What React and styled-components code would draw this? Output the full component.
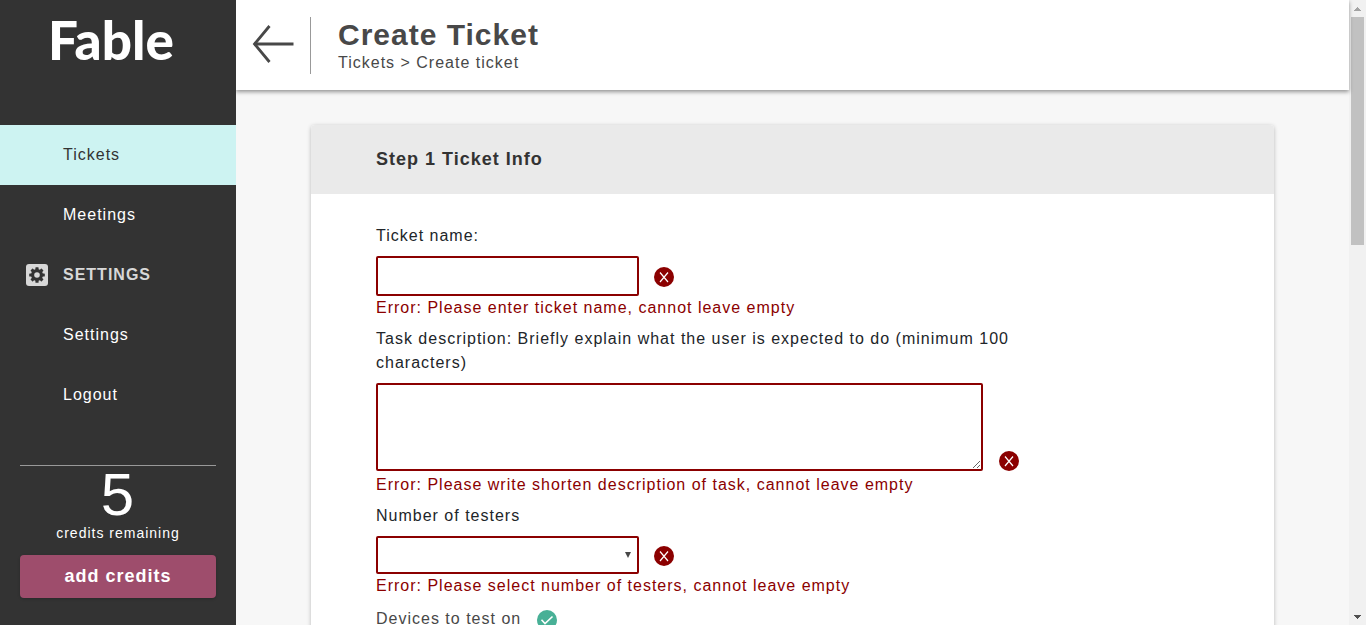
import React from "react";
import styled, { createGlobalStyle } from "styled-components";

const GlobalStyle = createGlobalStyle`
  *, *::before, *::after { box-sizing: border-box; }
  body {
    margin: 0;
    font-family: "Liberation Sans", Arial, sans-serif;
    font-size: 16px;
    line-height: 24px;
    letter-spacing: 1px;
    color: #212529;
    background: #f7f7f7;
  }
  button, input, select, textarea { font: inherit; letter-spacing: inherit; color: inherit; }
`;

const Shell = styled.div`
  display: grid;
  grid-template-columns: 236px minmax(0, 1fr) 17px;
  height: 100vh;
  overflow: hidden;
`;

/* Sidebar */

const Sidebar = styled.aside`
  position: relative;
  z-index: 2;
  display: flex;
  flex-direction: column;
  background: #333;
  color: #fff;
  overflow: hidden;
`;

const Logo = styled.a`
  flex: none;
  height: 125px;
  padding: 10px 14px 0 0;
  font-family: Lato, "Liberation Sans", sans-serif;
  font-size: 53px;
  font-weight: 900;
  line-height: 60px;
  letter-spacing: 0;
  text-align: center;
  color: #fff;
  text-decoration: none;
`;

const NavList = styled.ul`
  margin: 0;
  padding: 0;
  list-style: none;
`;

const NavLink = styled.a`
  display: flex;
  align-items: center;
  height: 60px;
  padding-left: 63px;
  text-decoration: none;
  color: ${(p) => (p.$active ? "#333" : "#fff")};
  background: ${(p) => (p.$active ? "#cdf3f2" : "transparent")};
`;

const NavHeading = styled.h2`
  display: flex;
  align-items: center;
  gap: 15px;
  height: 60px;
  margin: 0;
  padding-left: 26px;
  font-size: 16px;
  font-weight: 700;
  color: #d8d8d8;
`;

const Credits = styled.section`
  display: flex;
  flex-direction: column;
  margin: 40px 20px 0;
  border-top: 1px solid #999;
  text-align: center;
`;

const CreditCount = styled.strong`
  font-size: 60px;
  font-weight: 400;
  line-height: 58px;
`;

const CreditLabel = styled.span`
  font-size: 14px;
  line-height: 18px;
`;

const AddCredits = styled.button`
  height: 43px;
  margin-top: 13px;
  padding: 0 0 2px;
  border: 0;
  border-radius: 4px;
  background: #9e4d6c;
  color: #fff;
  font-size: 18px;
  font-weight: 700;
  box-shadow: 0 1px 3px rgba(0, 0, 0, 0.2);
  cursor: pointer;
`;

/* Main column */

const Main = styled.main`
  display: flex;
  flex-direction: column;
  min-height: 0;
`;

const Header = styled.header`
  position: relative;
  z-index: 1;
  flex: none;
  display: flex;
  align-items: center;
  height: 90px;
  padding-left: 16px;
  background: #fff;
  color: #484848;
  box-shadow: 0 2px 4px rgba(0, 0, 0, 0.4);
`;

const BackButton = styled.button`
  display: flex;
  padding: 0 0 2px;
  border: 0;
  background: none;
  cursor: pointer;
`;

const HeaderText = styled.div`
  margin-left: 16px;
  padding: 1px 0 0 27px;
  border-left: 1px solid #999;
`;

const Title = styled.h1`
  margin: 0;
  font-size: 30px;
  line-height: 34px;
`;

const Breadcrumb = styled.nav`
  line-height: 22px;
  a { color: inherit; text-decoration: none; }
`;

const Scroller = styled.div`
  flex: 1;
  min-height: 0;
  overflow-y: auto;
  scrollbar-width: none;
  padding: 35px 75px;
`;

const Card = styled.form`
  background: #fff;
  border-radius: 4px 4px 0 0;
  box-shadow: 0 1px 4px rgba(0, 0, 0, 0.25);
`;

const CardTitle = styled.h2`
  display: flex;
  align-items: center;
  height: 69px;
  margin: 0;
  padding: 0 65px 2px;
  border-radius: 4px 4px 0 0;
  background: #eaeaea;
  color: #333;
  font-size: 18px;
`;

const CardBody = styled.div`
  display: flex;
  flex-direction: column;
  gap: 7px;
  padding: 30px 65px;
`;

const Field = styled.div`
  width: 100%;
  max-width: 643px;
`;

const Label = styled.label`
  display: block;
  margin-bottom: 8px;
`;

const ControlRow = styled.div`
  display: flex;
  align-items: ${(p) => (p.$tall ? "flex-end" : "center")};
  gap: ${(p) => (p.$tall ? 16 : 15)}px;
  margin-bottom: ${(p) => (p.$tall ? 2 : 0)}px;
`;

const StatusIcon = styled.svg`
  flex: none;
  width: 20px;
  height: 20px;
  margin-top: 2px;
`;

const TextInput = styled.input`
  width: 263px;
  height: 40px;
  padding: 0 10px;
  border: 2px solid #8b0000;
  border-radius: 2px;
  background: #fff;
`;

const TextArea = styled.textarea`
  flex: 1;
  min-width: 0;
  height: 88px;
  padding: 6px 10px;
  border: 2px solid #8b0000;
  border-radius: 2px;
  background: #fff;
`;

const SelectWrap = styled.div`
  position: relative;
  display: flex;
  svg {
    position: absolute;
    top: 16px;
    right: 7px;
    pointer-events: none;
  }
`;

const Select = styled.select`
  appearance: none;
  width: 263px;
  height: 38px;
  padding: 0 24px 0 10px;
  border: 2px solid #8b0000;
  border-radius: 2px;
  background: #fff;
`;

const ErrorText = styled.p`
  margin: 0;
  color: #8b0000;
`;

const DeviceGroup = styled.fieldset`
  margin: 0;
  padding: 0;
  border: 0;
  color: #484848;
`;

const DeviceLegend = styled.legend`
  display: flex;
  align-items: center;
  gap: 16px;
  padding: 2px 0 8px;
`;

const DeviceOption = styled.label`
  display: flex;
  align-items: center;
  gap: 8px;
`;

/* Scrollbar */

const ScrollTrack = styled.div`
  display: flex;
  flex-direction: column;
  align-items: center;
  background: #f1f1f1;
`;

const ScrollThumb = styled.div`
  width: 13px;
  flex: 0 0 228px;
  margin-bottom: auto;
  background: #c1c1c1;
`;

function GearIcon() {
  const teeth = [0, 45, 90, 135, 180, 225, 270, 315];
  return (
    <svg width="22" height="22" viewBox="0 0 22 22" aria-hidden="true">
      <rect width="22" height="22" rx="3" fill="#d8d8d8" />
      <g fill="#333">
        <circle cx="11" cy="11" r="6" />
        {teeth.map((a) => (
          <rect key={a} x="9.4" y="3.2" width="3.2" height="4" rx="0.6" transform={`rotate(${a} 11 11)`} />
        ))}
      </g>
      <circle cx="11" cy="11" r="2.8" fill="#d8d8d8" />
    </svg>
  );
}

function ArrowLeft() {
  return (
    <svg width="42" height="40" viewBox="0 0 42 40" fill="none" stroke="#484848" aria-hidden="true">
      <path d="M41.5 20H2" strokeWidth="2.8" />
      <path d="M17.5 2L2.5 20L17.5 38" strokeWidth="2.8" />
    </svg>
  );
}

function ErrorIcon() {
  return (
    <StatusIcon viewBox="0 0 20 20" role="img" aria-label="Error">
      <circle cx="10" cy="10" r="10" fill="#8b0000" />
      <path d="M6 5.5L14 15M14 5.5L6 15" stroke="#fff" strokeWidth="1.2" fill="none" />
    </StatusIcon>
  );
}

function CheckIcon() {
  return (
    <StatusIcon viewBox="0 0 20 20" role="img" aria-label="Valid">
      <circle cx="10" cy="10" r="10" fill="#48b096" />
      <path d="M4.5 9.8L8 13.5L15.5 6.5" stroke="#fff" strokeWidth="1.6" fill="none" />
    </StatusIcon>
  );
}

function ScrollArrow({ down }) {
  return (
    <svg width="17" height="17" viewBox="0 0 17 17" shapeRendering="crispEdges" aria-hidden="true">
      <path d={down ? "M5 7H12L8.5 11Z" : "M5 11H12L8.5 7Z"} fill={down ? "#505050" : "#a3a3a3"} />
    </svg>
  );
}

export default function App() {
  return (
    <Shell>
      <GlobalStyle />
      <Sidebar>
        <Logo href="#home">Fable</Logo>
        <nav>
          <NavList>
            <li><NavLink href="#tickets" $active>Tickets</NavLink></li>
            <li><NavLink href="#meetings">Meetings</NavLink></li>
          </NavList>
          <NavHeading><GearIcon />SETTINGS</NavHeading>
          <NavList>
            <li><NavLink href="#settings">Settings</NavLink></li>
            <li><NavLink href="#logout">Logout</NavLink></li>
          </NavList>
        </nav>
        <Credits>
          <CreditCount>5</CreditCount>
          <CreditLabel>credits remaining</CreditLabel>
          <AddCredits type="button">add credits</AddCredits>
        </Credits>
      </Sidebar>

      <Main>
        <Header>
          <BackButton type="button" aria-label="Back"><ArrowLeft /></BackButton>
          <HeaderText>
            <Title>Create Ticket</Title>
            <Breadcrumb><a href="#tickets">Tickets</a> &gt; Create ticket</Breadcrumb>
          </HeaderText>
        </Header>
        <Scroller>
          <Card>
            <CardTitle>Step 1 Ticket Info</CardTitle>
            <CardBody>
              <Field>
                <Label htmlFor="ticket-name">Ticket name:</Label>
                <ControlRow>
                  <TextInput id="ticket-name" type="text" aria-describedby="ticket-name-error" />
                  <ErrorIcon />
                </ControlRow>
                <ErrorText id="ticket-name-error">Error: Please enter ticket name, cannot leave empty</ErrorText>
              </Field>
              <Field>
                <Label htmlFor="task">
                  Task description: Briefly explain what the user is expected to do (minimum 100 characters)
                </Label>
                <ControlRow $tall>
                  <TextArea id="task" aria-describedby="task-error" />
                  <ErrorIcon />
                </ControlRow>
                <ErrorText id="task-error">Error: Please write shorten description of task, cannot leave empty</ErrorText>
              </Field>
              <Field>
                <Label htmlFor="testers">Number of testers</Label>
                <ControlRow>
                  <SelectWrap>
                    <Select id="testers" defaultValue="" aria-describedby="testers-error">
                      <option value="" />
                      <option>1</option>
                      <option>2</option>
                      <option>3</option>
                    </Select>
                    <svg width="8" height="6" viewBox="0 0 8 6" aria-hidden="true">
                      <path d="M1 0H7L4 6Z" fill="#484848" />
                    </svg>
                  </SelectWrap>
                  <ErrorIcon />
                </ControlRow>
                <ErrorText id="testers-error">Error: Please select number of testers, cannot leave empty</ErrorText>
              </Field>
              <DeviceGroup>
                <DeviceLegend>Devices to test on <CheckIcon /></DeviceLegend>
                <DeviceOption><input type="checkbox" defaultChecked />Desktop</DeviceOption>
                <DeviceOption><input type="checkbox" />Mobile</DeviceOption>
              </DeviceGroup>
            </CardBody>
          </Card>
        </Scroller>
      </Main>

      <ScrollTrack aria-hidden="true">
        <ScrollArrow />
        <ScrollThumb />
        <ScrollArrow down />
      </ScrollTrack>
    </Shell>
  );
}
